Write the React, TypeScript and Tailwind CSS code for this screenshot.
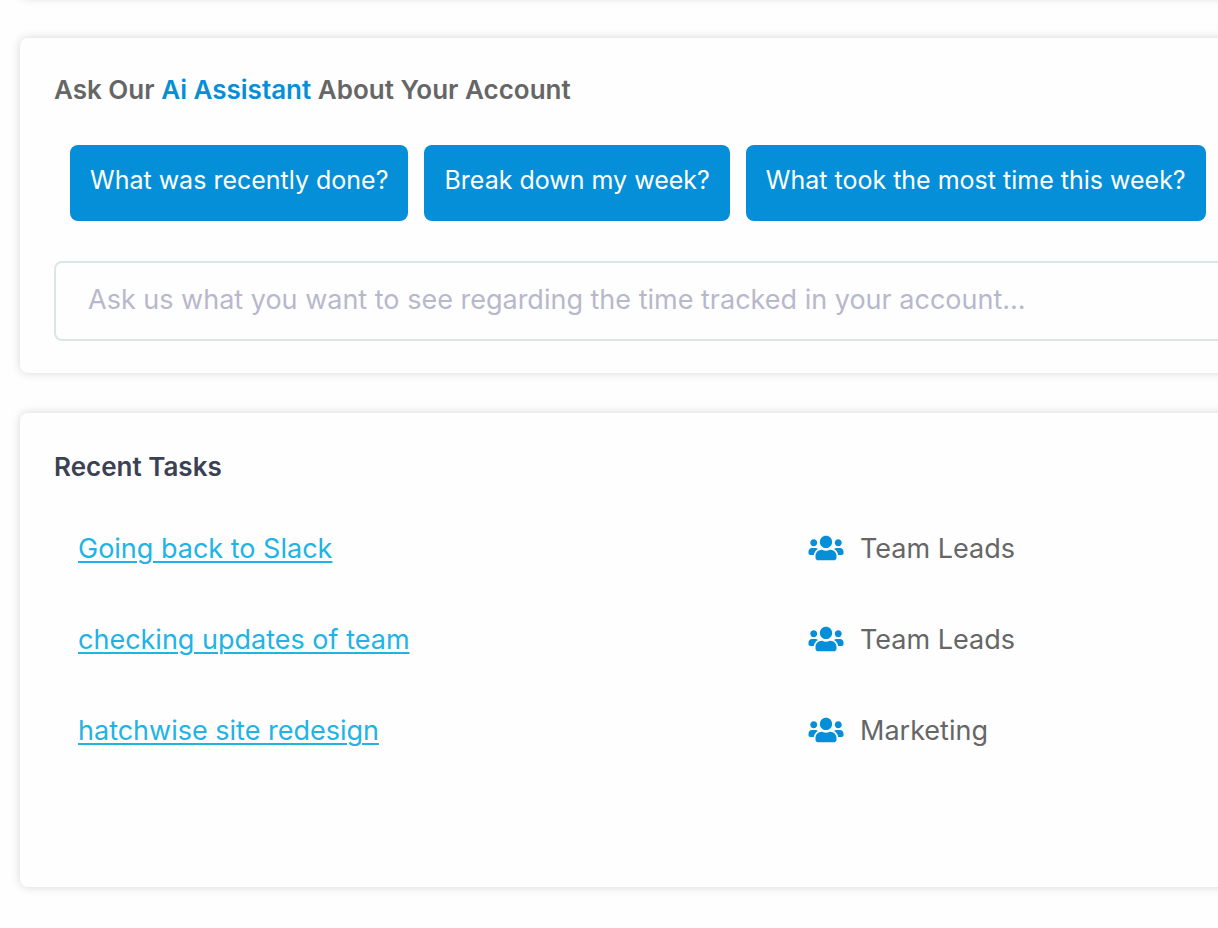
import React, { useState } from "react";
import { FaUsers } from "react-icons/fa";

const prompts = [
  "What was recently done?",
  "Break down my week?",
  "What took the most time this week?",
];

const tasks = [
  { id: 1, name: "Going back to Slack", team: "Team Leads" },
  { id: 2, name: "checking updates of team", team: "Team Leads" },
  { id: 3, name: "hatchwise site redesign", team: "Marketing" },
];

function Card({ children, className = "" }: any) {
  return (
    <section
      className={`-mr-5 rounded-l-lg bg-[#fefefe] pl-[34px] shadow-[0_0_10px_rgba(0,0,0,0.16)] ${className}`}
    >
      {children}
    </section>
  );
}

export default function App() {
  const [question, setQuestion] = useState("");

  return (
    <main className="flex min-h-screen flex-col gap-10 overflow-hidden bg-[#fefefe] pl-5 font-['Inter',sans-serif] text-[27px] leading-9 text-[#666666]">
      <Card className="-mt-6 h-[22px]" />

      <Card className="pt-[34px] pb-8">
        <h2 className="text-[26px] font-semibold">
          Ask Our <span className="text-[#058fd9]">Ai Assistant</span> About Your
          Account
        </h2>
        <div className="mt-[37px] flex gap-4 pl-4">
          {prompts.map((prompt) => (
            <button
              key={prompt}
              type="button"
              onClick={() => setQuestion(prompt)}
              className="rounded-lg bg-[#058fd9] px-5 pt-[17px] pb-[23px] text-[25px] whitespace-nowrap text-white"
            >
              {prompt}
            </button>
          ))}
        </div>
        <input
          type="text"
          aria-label="Ask about your account"
          placeholder="Ask us what you want to see regarding the time tracked in your account..."
          value={question}
          onChange={(e) => setQuestion(e.target.value)}
          className="mt-10 block h-20 w-full rounded-l-lg border-2 border-r-0 border-[#dae7e7] pb-1 pl-8 placeholder:text-[#b8b8cb] focus:outline-none"
        />
      </Card>

      <Card className="pt-9 pb-[111px]">
        <h2 className="text-[26px] font-semibold text-[#3b4154]">
          Recent Tasks
        </h2>
        <table className="mt-[18px] w-full table-fixed text-left">
          <tbody>
            {tasks.map((task) => (
              <tr key={task.id} className="h-[91px]">
                <td className="w-[730px] pl-6">
                  <a
                    href="#"
                    className="text-[#22b3e6] underline decoration-2 underline-offset-3"
                  >
                    {task.name}
                  </a>
                </td>
                <td className="pl-6">
                  <span className="flex items-center gap-4">
                    <FaUsers className="mb-0.5 h-7 w-9 text-[#058fd9]" />
                    {task.team}
                  </span>
                </td>
              </tr>
            ))}
          </tbody>
        </table>
      </Card>
    </main>
  );
}
